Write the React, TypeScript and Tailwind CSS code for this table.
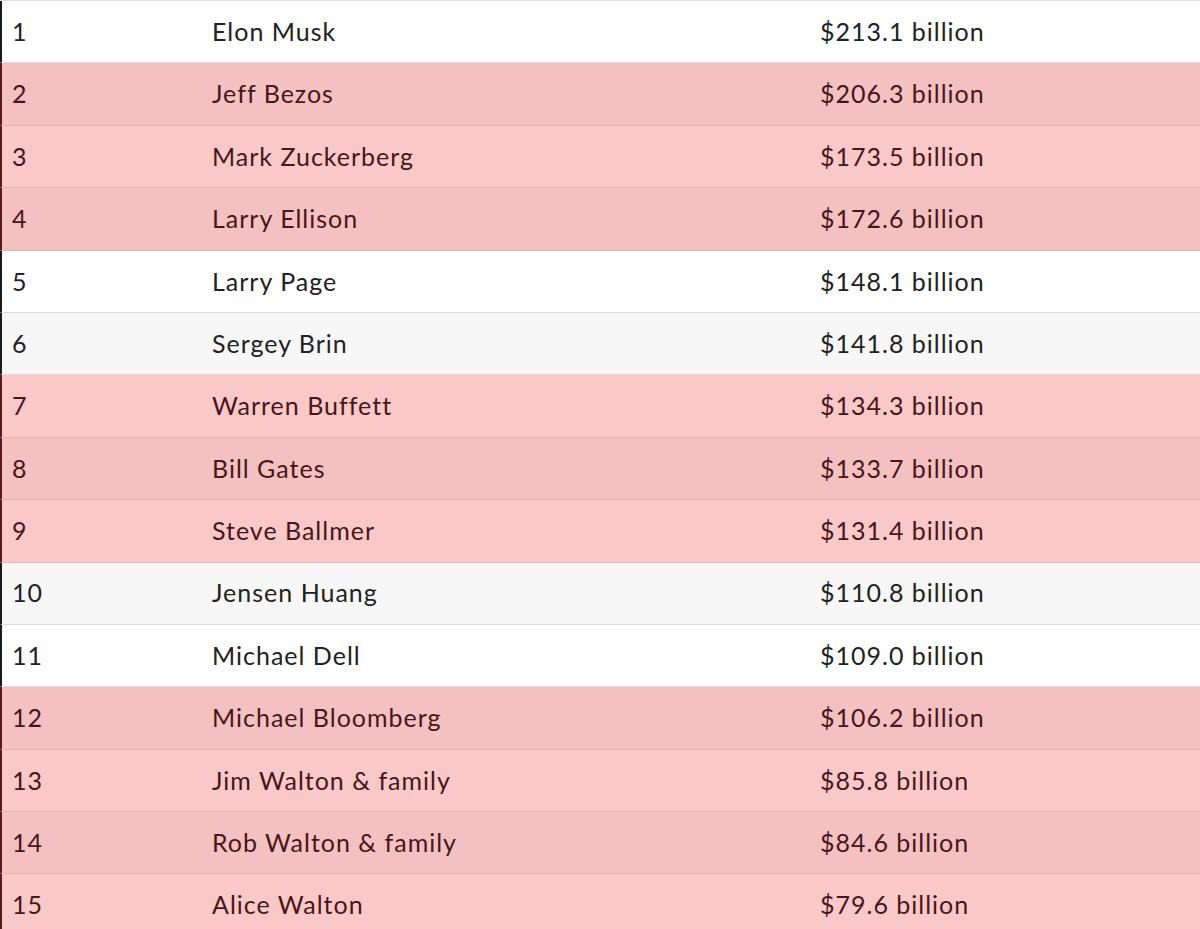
type Row = { rank: number; name: string; worth: string; tone: 'white' | 'gray' | 'pink' | 'pinkDark' };

const rows: Row[] = [
  { rank: 1, name: 'Elon Musk', worth: '$213.1 billion', tone: 'white' },
  { rank: 2, name: 'Jeff Bezos', worth: '$206.3 billion', tone: 'pinkDark' },
  { rank: 3, name: 'Mark Zuckerberg', worth: '$173.5 billion', tone: 'pink' },
  { rank: 4, name: 'Larry Ellison', worth: '$172.6 billion', tone: 'pinkDark' },
  { rank: 5, name: 'Larry Page', worth: '$148.1 billion', tone: 'white' },
  { rank: 6, name: 'Sergey Brin', worth: '$141.8 billion', tone: 'gray' },
  { rank: 7, name: 'Warren Buffett', worth: '$134.3 billion', tone: 'pink' },
  { rank: 8, name: 'Bill Gates', worth: '$133.7 billion', tone: 'pinkDark' },
  { rank: 9, name: 'Steve Ballmer', worth: '$131.4 billion', tone: 'pink' },
  { rank: 10, name: 'Jensen Huang', worth: '$110.8 billion', tone: 'gray' },
  { rank: 11, name: 'Michael Dell', worth: '$109.0 billion', tone: 'white' },
  { rank: 12, name: 'Michael Bloomberg', worth: '$106.2 billion', tone: 'pinkDark' },
  { rank: 13, name: 'Jim Walton & family', worth: '$85.8 billion', tone: 'pink' },
  { rank: 14, name: 'Rob Walton & family', worth: '$84.6 billion', tone: 'pinkDark' },
  { rank: 15, name: 'Alice Walton', worth: '$79.6 billion', tone: 'pink' },
];

const toneClass: Record<Row['tone'], string> = {
  white: 'bg-white text-[#222222] border-b-[#dcdcdc] border-l-[#1a1a1a]',
  gray: 'bg-[#f7f7f7] text-[#222222] border-b-[#dcdcdc] border-l-[#1a1a1a]',
  pink: 'bg-[#f9c8c9] text-[#4a1518] border-b-[#e6b2b3] border-l-[#5a1a1e]',
  pinkDark: 'bg-[#f3c1c2] text-[#4a1518] border-b-[#e6b2b3] border-l-[#5a1a1e]',
};

export default function App() {
  return (
    <div className="w-[1200px] h-[929px] overflow-hidden bg-white font-['Lato','Liberation_Sans',sans-serif] text-[25px] tracking-[1px]">
      <div className="border-t border-t-[#e2e2e2]">
        {rows.map((row) => (
          <div
            key={row.rank}
            className={`grid grid-cols-[198px_608px_1fr] items-center h-[62.4px] border-b border-l-2 ${toneClass[row.tone]}`}
          >
            <div className="pl-[10px]">{row.rank}</div>
            <div className="pl-[12px]">{row.name}</div>
            <div className="pl-[12px]">{row.worth}</div>
          </div>
        ))}
      </div>
    </div>
  );
}
